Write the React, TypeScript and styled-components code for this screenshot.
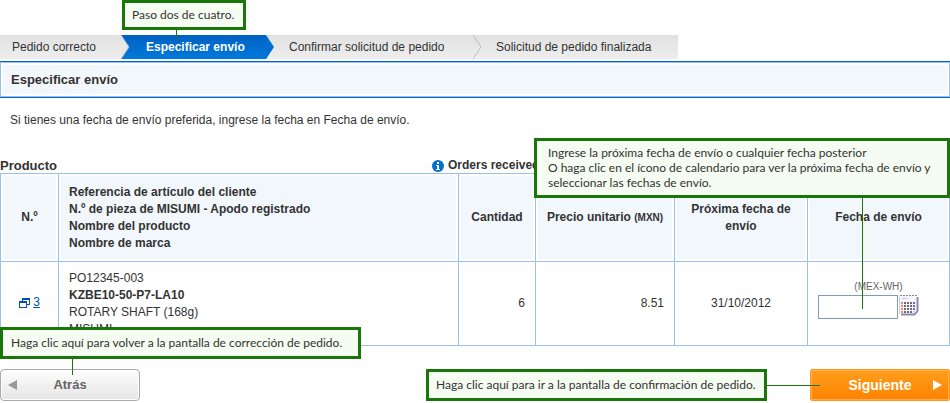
import React from "react";
import styled, { createGlobalStyle, css } from "styled-components";

const GlobalStyle = createGlobalStyle`
  *, *::before, *::after { box-sizing: border-box; }
  body {
    margin: 0;
    background: #fff;
    color: #333;
    font: 12px/17px "Liberation Sans", Arial, sans-serif;
  }
`;

const Page = styled.main`
  padding-top: 35px;
`;

const Steps = styled.ol`
  display: flex;
  margin: 0;
  padding: 0;
  list-style: none;
`;

const Step = styled.li<{ $width: number; $current?: boolean; $first?: boolean }>`
  position: relative;
  flex: 0 0 ${(p) => p.$width}px;
  height: 24px;
  padding-left: 23px;
  line-height: 24px;
  white-space: nowrap;
  background: linear-gradient(#e1e1e1, #eee);
  ${(p) => p.$first && css`padding-left: 12px;`}
  ${(p) =>
    p.$current &&
    css`
      padding-left: 25px;
      font-weight: bold;
      color: #fff;
      background: linear-gradient(#0061c2, #0079dc);
    `}
`;

const StepArrow = styled.svg`
  position: absolute;
  top: 0;
  left: 0;
`;

const Title = styled.h1`
  margin: 2px 0 0;
  padding: 9px 11px;
  border: 1px solid #0066cc;
  border-width: 1px 0;
  font-size: 13px;
  line-height: 17px;
  background: #f2f7fc;
  box-shadow: inset 0 0 0 1px #99c2eb, inset 0 0 0 3px #fff;
`;

const Intro = styled.p`
  margin: 14px 10px 0;
`;

const ListHead = styled.div`
  display: grid;
  grid-template-columns: 432px 1fr;
  align-items: center;
  margin-top: 29px;
  font-weight: bold;
  line-height: 15px;
`;

const ListTitle = styled.h2`
  margin: 0;
  font-size: 13px;
`;

const Note = styled.div`
  display: flex;
  align-items: center;
  gap: 4px;
  white-space: nowrap;
`;

const Table = styled.table`
  width: 100%;
  border-collapse: collapse;
  table-layout: fixed;
`;

const Col = styled.col<{ $w?: number }>`
  width: ${(p) => (p.$w ? `${p.$w}px` : "auto")};
`;

const HeadCell = styled.th<{ $left?: boolean }>`
  position: relative;
  height: 88px;
  padding: 0 ${(p) => (p.$left ? 10 : 6)}px;
  border: 1px solid #99c2eb;
  text-align: ${(p) => (p.$left ? "left" : "center")};
  background: #f2f7fc;
  background-clip: padding-box;
  box-shadow: inset 0 0 0 2px #fff;
`;

const Currency = styled.span`
  font-size: 10px;
`;

const Cell = styled.td<{ $align?: "left" | "right" | "center" }>`
  height: 84px;
  padding: 0 10px;
  border: 1px solid #99c2eb;
  text-align: ${(p) => p.$align ?? "left"};
`;

const NumberLink = styled.a`
  display: inline-flex;
  align-items: center;
  gap: 3px;
  color: #0050b4;
`;

const DateField = styled.div`
  padding-bottom: 10px;
`;

const Warehouse = styled.label`
  display: block;
  text-align: center;
  font-size: 10px;
  line-height: 16px;
  color: #666;
`;

const DateRow = styled.div`
  display: flex;
  gap: 1px;
`;

const DateInput = styled.input`
  width: 80px;
  height: 24px;
  padding: 1px 3px;
  border: 1px solid #7f9db9;
  border-radius: 0;
  font: inherit;
  background: #fff;
`;

const CalendarButton = styled.button`
  display: block;
  width: 20px;
  height: 21px;
  padding: 0;
  border: 0;
  background: none;
`;

const Actions = styled.div`
  display: flex;
  justify-content: space-between;
  margin-top: 23px;
`;

const ActionSlot = styled.div`
  position: relative;
`;

const ActionButton = styled.button<{ $primary?: boolean }>`
  display: flex;
  align-items: center;
  flex-direction: ${(p) => (p.$primary ? "row-reverse" : "row")};
  width: 140px;
  height: 32px;
  padding: ${(p) => (p.$primary ? "0 7px 0 16px" : "0 16px 0 7px")};
  border: 1px solid ${(p) => (p.$primary ? "#ff981f" : "#aaa")};
  border-radius: ${(p) => (p.$primary ? 2 : 4)}px;
  font: bold ${(p) => (p.$primary ? 14 : 13)}px/16px "Liberation Sans", Arial, sans-serif;
  color: ${(p) => (p.$primary ? "#fff" : "#666")};
  background: ${(p) =>
    p.$primary ? "linear-gradient(#ff9f1c, #ff8200)" : "linear-gradient(#fdfdfd, #e6e6e6)"};
  box-shadow: inset 0 0 0 1px ${(p) => (p.$primary ? "#ffb04d" : "#fff")};
`;

const ActionLabel = styled.span`
  flex: 1;
  text-align: center;
`;

type Spot = "step" | "date" | "back" | "next";

const spots = {
  step: css`
    left: 1px;
    bottom: 29px;
    width: 124px;
    height: 30px;
    padding: 0 7px;
    line-height: 24px;
    &::after { left: 51px; top: 27px; width: 1px; height: 9px; }
  `,
  date: css`
    right: -1px;
    top: -36px;
    height: 60px;
    width: 416px;
    padding: 4px 11px;
    &::after { left: 325px; top: 57px; width: 1px; height: 111px; }
  `,
  back: css`
    left: 0;
    bottom: 42px;
    width: 361px;
    padding: 0 8px;
    line-height: 26px;
    &::after { left: 69px; top: 29px; width: 1px; height: 16px; }
  `,
  next: css`
    right: 183px;
    top: 0;
    width: 341px;
    padding: 0 7px;
    line-height: 26px;
    &::after { left: 338px; top: 13px; width: 53px; height: 1px; }
  `,
};

const Callout = styled.div<{ $spot: Spot }>`
  position: absolute;
  z-index: 2;
  border: 3px solid #1a750b;
  font: 12px/15px Lato, sans-serif;
  text-align: left;
  white-space: nowrap;
  color: #333;
  background: #f5fcf2;
  pointer-events: none;
  &::after {
    content: "";
    position: absolute;
    background: #1a750b;
  }
  ${(p) => spots[p.$spot]}
`;

const InfoIcon = () => (
  <svg width="12" height="12" viewBox="0 0 12 12" aria-hidden="true">
    <circle cx="6" cy="6" r="6" fill="#0070cc" />
    <path d="M5 2h2v2H5zM4 5h3v4h1v1H4V9h1V6H4z" fill="#fff" />
  </svg>
);

const WindowsIcon = () => (
  <svg width="11" height="10" viewBox="0 0 11 10" aria-hidden="true">
    <path d="M3 0h8v7H8V6h2V2H4v1H3z" fill="#0050b4" />
    <path d="M0 3h8v7H0zM1 5v4h6V5z" fill="#0050b4" fillRule="evenodd" />
  </svg>
);

const CalendarIcon = () => (
  <svg width="20" height="21" viewBox="0 0 20 21" aria-hidden="true">
    <path d="M1 1h17v15l-3 3H1z" fill="#f6f6fd" />
    <path d="M.5 2v17" stroke="#cfcfe2" />
    <path d="M18.500 2v14l-3 3.500H2" fill="none" stroke="#8c8ca4" strokeWidth="2" />
    <path d="M14 19v-3h4z" fill="#d5d5e4" />
    <path d="M1 .5h18" stroke="#85859a" strokeDasharray="2 1" />
    <path d="M3 3.500h6" stroke="#c8c8f0" />
    <path d="M2 8h3M2 11h3M2 14h3M2 17h3" stroke="#f58468" strokeWidth="2" strokeDasharray="2 1" />
    <path d="M5 8h9M5 11h9M5 14h9M5 17h9" stroke="#75656f" strokeWidth="2" strokeDasharray="2 1" />
    <path d="M14 8h3M14 11h3M14 14h3" stroke="#6a60e4" strokeWidth="2" strokeDasharray="2 1" />
  </svg>
);

export default function App() {
  return (
    <>
      <GlobalStyle />
      <Page>
        <Steps>
          <Step $width={121} $first>Pedido correcto</Step>
          <Step $width={145} $current aria-current="step">
            <StepArrow width="9" height="24" viewBox="0 0 9 24" aria-hidden="true">
              <path d="M0 0l8 12-8 12z" fill="#e8e8e8" />
              <path d="M0 0l8 12-8 12" fill="none" stroke="#a5b9cd" />
            </StepArrow>
            Especificar envío
            <Callout $spot="step">Paso dos de cuatro.</Callout>
          </Step>
          <Step $width={207}>
            <StepArrow width="9" height="24" viewBox="0 0 9 24" aria-hidden="true">
              <path d="M0 0l8 12-8 12z" fill="#006dcf" />
            </StepArrow>
            Confirmar solicitud de pedido
          </Step>
          <Step $width={205}>
            <StepArrow width="9" height="24" viewBox="0 0 9 24" aria-hidden="true">
              <path d="M0 0l8 12-8 12" fill="none" stroke="#bbb" />
            </StepArrow>
            Solicitud de pedido finalizada
          </Step>
        </Steps>
        <Title>Especificar envío</Title>
        <Intro>Si tienes una fecha de envío preferida, ingrese la fecha en Fecha de envío.</Intro>
        <ListHead>
          <ListTitle>Producto</ListTitle>
          <Note>
            <InfoIcon />
            Orders received
          </Note>
        </ListHead>
        <Table>
          <colgroup>
            <Col $w={58} />
            <Col />
            <Col $w={77} />
            <Col $w={139} />
            <Col $w={133} />
            <Col $w={142} />
          </colgroup>
          <thead>
            <tr>
              <HeadCell>N.º</HeadCell>
              <HeadCell $left>
                Referencia de artículo del cliente
                <br />
                N.º de pieza de MISUMI - Apodo registrado
                <br />
                Nombre del producto
                <br />
                Nombre de marca
              </HeadCell>
              <HeadCell>Cantidad</HeadCell>
              <HeadCell>
                Precio unitario <Currency>(MXN)</Currency>
              </HeadCell>
              <HeadCell>Próxima fecha de envío</HeadCell>
              <HeadCell>
                Fecha de envío
                <Callout $spot="date">
                  Ingrese la próxima fecha de envío o cualquier fecha posterior
                  <br />
                  O haga clic en el ícono de calendario para ver la próxima fecha de envío y
                  <br />
                  seleccionar las fechas de envío.
                </Callout>
              </HeadCell>
            </tr>
          </thead>
          <tbody>
            <tr>
              <Cell $align="center">
                <NumberLink href="#item-3">
                  <WindowsIcon />3
                </NumberLink>
              </Cell>
              <Cell>
                PO12345-003
                <br />
                <b>KZBE10-50-P7-LA10</b>
                <br />
                ROTARY SHAFT (168g)
                <br />
                MISUMI
              </Cell>
              <Cell $align="right">6</Cell>
              <Cell $align="right">8.51</Cell>
              <Cell $align="center">31/10/2012</Cell>
              <Cell>
                <DateField>
                  <Warehouse htmlFor="ship-date">(MEX-WH)</Warehouse>
                  <DateRow>
                    <DateInput id="ship-date" type="text" />
                    <CalendarButton type="button" aria-label="Calendario">
                      <CalendarIcon />
                    </CalendarButton>
                  </DateRow>
                </DateField>
              </Cell>
            </tr>
          </tbody>
        </Table>
        <Actions>
          <ActionSlot>
            <ActionButton type="button">
              <svg width="9" height="10" viewBox="0 0 9 10" aria-hidden="true">
                <path d="M9 0v10L0 5z" fill="#999" />
              </svg>
              <ActionLabel>Atrás</ActionLabel>
            </ActionButton>
            <Callout $spot="back">
              Haga clic aquí para volver a la pantalla de corrección de pedido.
            </Callout>
          </ActionSlot>
          <ActionSlot>
            <ActionButton type="button" $primary>
              <svg width="9" height="10" viewBox="0 0 9 10" aria-hidden="true">
                <path d="M0 0v10l9-5z" fill="#fff" />
              </svg>
              <ActionLabel>Siguiente</ActionLabel>
            </ActionButton>
            <Callout $spot="next">
              Haga clic aquí para ir a la pantalla de confirmación de pedido.
            </Callout>
          </ActionSlot>
        </Actions>
      </Page>
    </>
  );
}
